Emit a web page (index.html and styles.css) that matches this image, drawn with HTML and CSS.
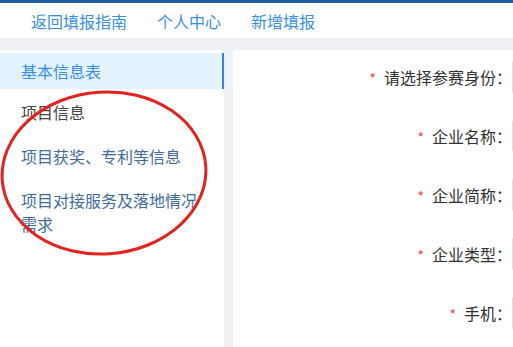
FILE: index.html
```html
<!DOCTYPE html>
<html lang="zh-CN">
<head>
<meta charset="utf-8">
<link rel="stylesheet" href="styles.css">
</head>
<body>
<div class="topline"></div>
<nav class="nav">
  <a class="nav-item">返回填报指南</a>
  <a class="nav-item">个人中心</a>
  <a class="nav-item">新增填报</a>
</nav>
<div class="layout">
  <aside class="side">
    <div class="side-item active">基本信息表</div>
    <div class="side-item plain">项目信息</div>
    <div class="side-item">项目获奖、专利等信息</div>
    <div class="side-item">项目对接服务及落地情况需求</div>
    <svg class="mark" width="220" height="180" viewBox="0 0 220 180">
      <ellipse cx="104" cy="86" rx="102" ry="81" fill="none" stroke="#e3231f" stroke-width="3" transform="rotate(-4 104 86)"/>
    </svg>
  </aside>
  <main class="main">
    <div class="row"><span class="label"><i class="req">*</i>请选择参赛身份：</span><span class="input"></span></div>
    <div class="row"><span class="label"><i class="req">*</i>企业名称：</span><span class="input"></span></div>
    <div class="row"><span class="label"><i class="req">*</i>企业简称：</span><span class="input"></span></div>
    <div class="row"><span class="label"><i class="req">*</i>企业类型：</span><span class="input"></span></div>
    <div class="row"><span class="label"><i class="req">*</i>手机：</span><span class="input"></span></div>
  </main>
</div>
</body>
</html>
```

FILE: styles.css
```css
html, body {
  margin: 0;
  padding: 0;
  width: 513px;
  height: 347px;
  overflow: hidden;
  background: #eff1f4;
  font-family: "Noto Sans CJK SC", "Noto Sans", sans-serif;
  font-size: 16px;
}
.topline {
  height: 3px;
  background: #1c5f9c;
}
.nav {
  height: 35px;
  background: #fff;
  display: flex;
  align-items: center;
  gap: 30px;
  padding-left: 31px;
}
.nav-item {
  color: #3a8fe3;
  line-height: 24px;
  white-space: nowrap;
}
.layout {
  display: flex;
  gap: 9px;
  padding-top: 12px;
  height: 297px;
}
.side {
  position: relative;
  flex: 0 0 224px;
  background: #fff;
  border-radius: 4px 4px 0 0;
  padding-top: 3px;
  box-sizing: border-box;
}
.side-item {
  padding: 11px 20px 9px 21px;
  line-height: 24px;
  color: #3e6b9d;
  width: 183px;
}
.side-item.plain {
  color: #444;
}
.side-item.active {
  padding: 6px 0 6px 21px;
  width: auto;
  background: #e2f3fd;
  color: #3a8fe3;
  border-right: 2px solid #2f86e0;
}
.mark {
  position: absolute;
  left: 0;
  top: 37px;
}
.main {
  flex: 1 1 auto;
  min-width: 0;
  overflow: hidden;
  background: #fff;
  border-radius: 4px 0 0 0;
  padding-top: 9px;
  display: flex;
  flex-direction: column;
  gap: 23px;
}
.row {
  display: flex;
  height: 36px;
  align-items: center;
}
.label {
  flex: 0 0 279px;
  text-align: right;
  color: #303133;
  line-height: 24px;
  white-space: nowrap;
}
.req {
  font-style: normal;
  color: #e8474a;
  font-size: 14px;
  margin-right: 8px;
}
.input {
  flex: 0 0 200px;
  height: 34px;
  border: 1px solid #dcdfe6;
  border-radius: 4px;
}
```
